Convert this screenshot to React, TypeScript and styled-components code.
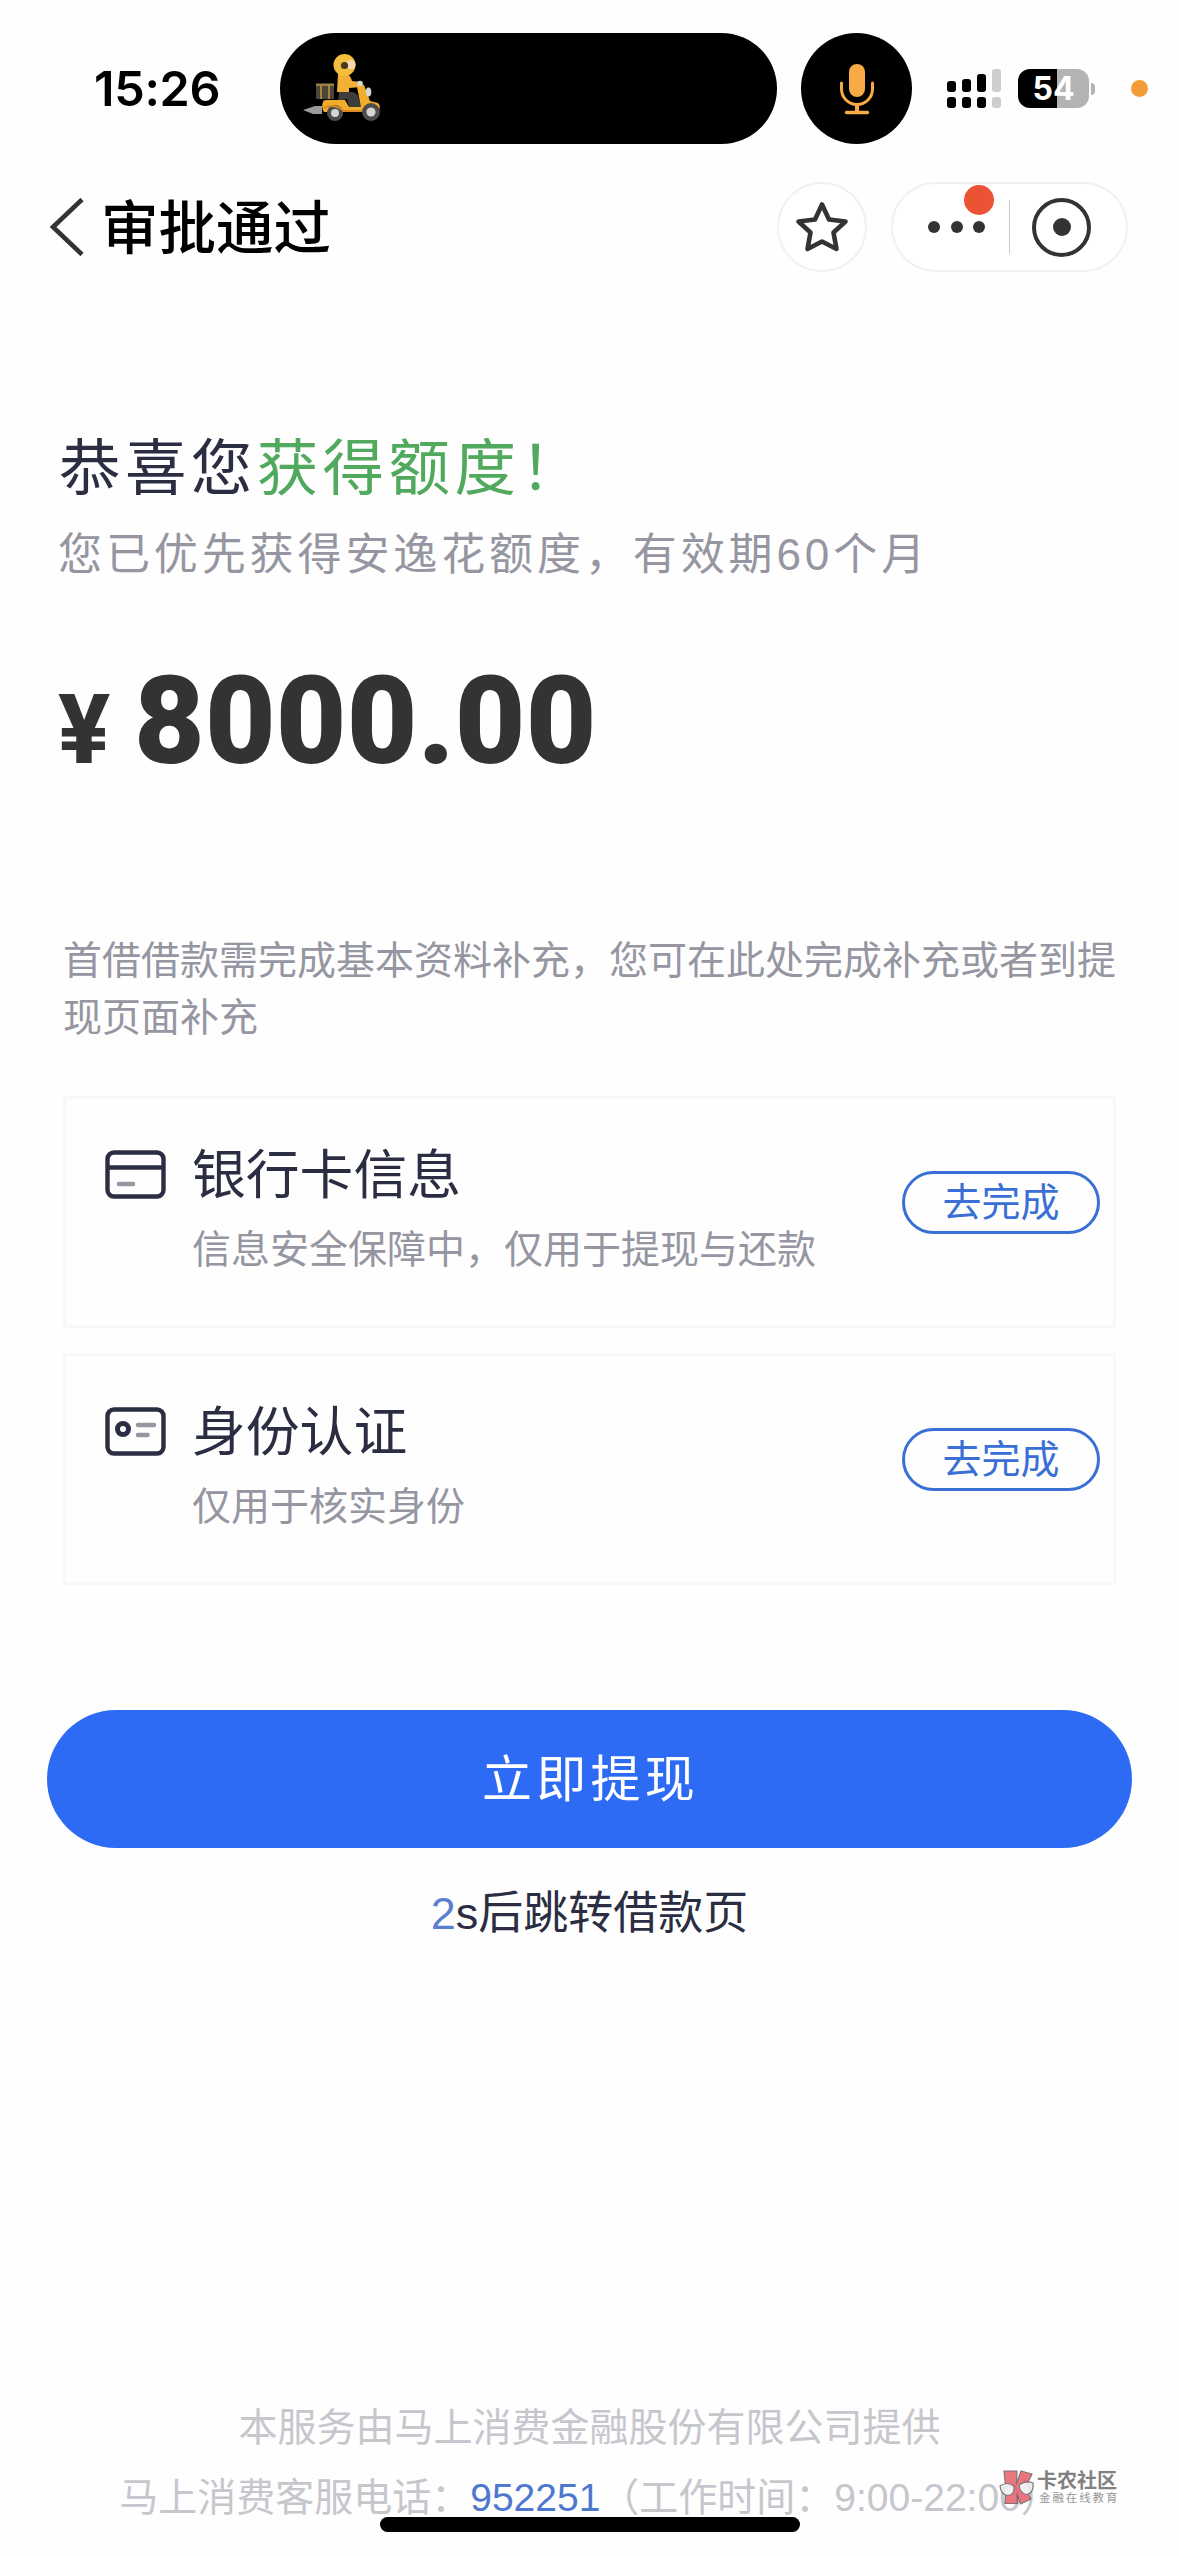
import React from "react";
import styled, { createGlobalStyle } from "styled-components";

const sans = `"Liberation Sans", "Noto Sans CJK SC", sans-serif`;
const ink = "#2b2d42";
const muted = "#9596a1";
const blue = "#3a6fd6";

const GlobalStyle = createGlobalStyle`
  body { margin: 0; background: #fefefe; }
  * { box-sizing: border-box; }
  button { font: inherit; cursor: pointer; }
`;

const Page = styled.div`
  position: relative;
  display: flex;
  flex-direction: column;
  width: 1179px;
  height: 2556px;
  overflow: hidden;
  background: #fefefe;
  color: ${ink};
  font-family: ${sans};
`;

const StatusBar = styled.header`
  display: flex;
  align-items: center;
  height: 111px;
  margin-top: 33px;
  padding: 0 31px 0 94px;
`;

const Clock = styled.time`
  width: 186px;
  font: 600 48.5px/58px Inter, sans-serif;
  letter-spacing: -0.3px;
  color: #000;
`;

const Island = styled.div`
  display: flex;
  align-items: center;
  width: 497px;
  height: 111px;
  padding-left: 20px;
  border-radius: 56px;
  background: #000;
`;

const MicBubble = styled.div`
  display: flex;
  align-items: center;
  justify-content: center;
  width: 111px;
  height: 111px;
  margin-left: 24px;
  border-radius: 50%;
  background: #000;
`;

const Signal = styled.div`
  display: flex;
  align-items: flex-end;
  gap: 6px;
  height: 39px;
  margin: 0 17px 0 35px;
`;

const SignalColumn = styled.div<{ $dim?: boolean }>`
  display: flex;
  flex-direction: column;
  gap: 5px;
  width: 9px;
  color: ${(p) => (p.$dim ? "#cdcdcd" : "#000")};
`;

const SignalBar = styled.i<{ $height: number }>`
  height: ${(p) => p.$height}px;
  border-radius: 3px;
  background: currentColor;
`;

const Battery = styled.div`
  display: flex;
  align-items: center;
  gap: 2px;
`;

const BatteryBody = styled.div`
  display: flex;
  align-items: center;
  justify-content: center;
  width: 71px;
  height: 39px;
  border-radius: 12px;
  background: linear-gradient(90deg, #000 55%, #b3b3b3 55%);
  color: #fff;
  font: 700 32px/39px Inter, sans-serif;
`;

const BatteryTip = styled.i`
  width: 4px;
  height: 12px;
  border-radius: 0 5px 5px 0;
  background: #b3b3b3;
`;

const PrivacyDot = styled.i`
  width: 17px;
  height: 17px;
  margin-left: auto;
  border-radius: 50%;
  background: #f29c38;
`;

const NavBar = styled.nav`
  display: flex;
  align-items: center;
  height: 90px;
  margin-top: 38px;
  padding: 0 51px 0 49px;
`;

const NavTitle = styled.h1`
  margin: 3px auto 0 16px;
  font-size: 57.5px;
  font-weight: 500;
  line-height: 80px;
  color: #000;
`;

const StarButton = styled.button`
  display: flex;
  align-items: center;
  justify-content: center;
  width: 90px;
  height: 90px;
  padding: 0;
  border: 2px solid #f1f1f1;
  border-radius: 50%;
  background: #fff;
`;

const Capsule = styled.div`
  display: flex;
  align-items: center;
  width: 237px;
  height: 90px;
  margin-left: 24px;
  padding-left: 35px;
  border: 2px solid #f1f1f1;
  border-radius: 45px;
  background: #fff;
`;

const MoreDots = styled.div`
  position: relative;
  display: flex;
  gap: 10.5px;
`;

const Dot = styled.i`
  width: 12px;
  height: 12px;
  border-radius: 50%;
  background: #333;
`;

const UnreadBadge = styled.i`
  position: absolute;
  right: -9px;
  bottom: 18px;
  width: 30px;
  height: 30px;
  border-radius: 50%;
  background: #ea5334;
`;

const CapsuleDivider = styled.i`
  width: 1px;
  height: 54px;
  margin: 0 22px 0 24px;
  background: #cacaca;
`;

const CloseRing = styled.div`
  display: flex;
  align-items: center;
  justify-content: center;
  width: 59px;
  height: 59px;
  border: 4px solid #333;
  border-radius: 50%;
`;

const CloseCore = styled.i`
  width: 18px;
  height: 18px;
  border-radius: 50%;
  background: #333;
`;

const Headline = styled.h2`
  margin: 153px 0 0 59px;
  font-size: 61.5px;
  font-weight: 400;
  line-height: 88px;
  letter-spacing: 4.4px;
`;

const Highlight = styled.span`
  color: #50a95c;
`;

const Subline = styled.p`
  margin: 10px 0 0 58px;
  font-size: 44px;
  line-height: 64px;
  letter-spacing: 3.9px;
  color: ${muted};
`;

const Amount = styled.div`
  display: flex;
  align-items: baseline;
  height: 140px;
  margin: 65px 0 0 58px;
  font: 900 122px/140px Roboto, sans-serif;
  color: #333;
`;

const Currency = styled.span`
  width: 76px;
  font-size: 97px;
  font-weight: 800;
  line-height: 1;
`;

const AmountValue = styled.span`
  letter-spacing: 0.2px;
`;

const Notice = styled.p`
  width: 1054px;
  margin: 140px 0 0 63px;
  font-size: 39px;
  line-height: 57px;
  color: ${muted};
`;

const TaskList = styled.ul`
  display: flex;
  flex-direction: column;
  gap: 25px;
  margin: 50px 63px 0;
  padding: 0;
  list-style: none;
`;

const TaskCard = styled.li`
  display: flex;
  align-items: flex-start;
  height: 232px;
  padding: 36px 13px 0 39px;
  border: 3px solid #f8f8f9;
`;

const TaskIcon = styled.svg`
  width: 61px;
  height: 49px;
  margin-top: 15px;
`;

const TaskText = styled.div`
  margin: 1px auto 0 26px;
`;

const TaskTitle = styled.h3`
  margin: 0;
  font-size: 53.8px;
  font-weight: 400;
  line-height: 78px;
`;

const TaskHint = styled.p`
  margin: 8px 0 0;
  font-size: 39px;
  line-height: 56px;
  color: ${muted};
`;

const TaskButton = styled.button`
  display: flex;
  align-items: center;
  justify-content: center;
  width: 198px;
  height: 63px;
  margin-top: 36px;
  padding: 0;
  border: 3px solid ${blue};
  border-radius: 32px;
  background: transparent;
  color: ${blue};
  font-size: 39px;
  line-height: 57px;
`;

const PrimaryButton = styled.button`
  height: 138px;
  margin: 125px 47px 0;
  padding: 2px 0 0 2px;
  border: 0;
  border-radius: 69px;
  background: #2d6bf5;
  color: #fff;
  font-size: 50px;
  line-height: 136px;
  letter-spacing: 4.2px;
`;

const Countdown = styled.p`
  margin: 33px 0 0;
  font-size: 45px;
  line-height: 66px;
  text-align: center;
`;

const Seconds = styled.span`
  color: #5b7fd0;
`;

const Footer = styled.footer`
  display: flex;
  flex-direction: column;
  align-items: center;
  margin-top: 446px;
  font-size: 39px;
  line-height: 70px;
  color: #c6c7cd;
  white-space: nowrap;
`;

const Phone = styled.a`
  color: #4d78cf;
`;

const HomeIndicator = styled.div`
  position: absolute;
  left: 380px;
  bottom: 24px;
  width: 420px;
  height: 15px;
  border-radius: 8px;
  background: #000;
`;

const Watermark = styled.div`
  position: absolute;
  right: 60px;
  bottom: 50px;
  display: flex;
  align-items: center;
  gap: 3px;
  opacity: 0.85;
`;

const WatermarkText = styled.div`
  display: flex;
  flex-direction: column;
  width: 82px;
  padding-top: 2px;
  white-space: nowrap;
`;

const WatermarkName = styled.span`
  font-size: 20px;
  font-weight: 700;
  line-height: 20px;
  color: #6b6b6b;
`;

const WatermarkTag = styled.span`
  padding-left: 2px;
  font-size: 11.5px;
  line-height: 15px;
  letter-spacing: 1.9px;
  color: #858585;
`;

const Scooter = () => (
  <svg width="84" height="84" viewBox="300 60 84 84">
    <path d="M303 107 L315 103 H322 V111 H313 Z" fill="#9b9b9d" transform="translate(0 16)" />
    <g transform="translate(0 12)">
      <rect x="316" y="84" width="18" height="16" rx="1" fill="#4b4638" />
      <path d="M316 86H334M321 86V100M329 86V100" stroke="#b99443" strokeWidth="1.6" />
      <path d="M338 75h9q4 2 5 7l9 1v5l-12 1v4h-12z" fill="#f2b136" />
      <path d="M339 93h14q6 2 6 8l3 7h-13l-2-8-9 2z" fill="#3f3d3c" />
      <path d="M323 103q0-2 4-2h18l4 7h12l-4-20 3-3 4 1 6 16 8 2q3 3 1 7l-6-1q-8-2-10 3h-39q-3-5-1-10z" fill="#f2ad2d" />
      <ellipse cx="368.500" cy="93" rx="2.800" ry="4.500" fill="#d5d5d5" />
      <circle cx="360" cy="84.500" r="2.800" fill="#cfdcd2" />
      <circle cx="335" cy="114" r="8" fill="#4c4c4c" />
      <circle cx="335" cy="114" r="4" fill="#d7d5d0" />
      <circle cx="371" cy="113" r="9" fill="#4c4c4c" />
      <circle cx="371" cy="113" r="4.600" fill="#d7d5d0" />
      <path d="M324 109q10-5 20 3h18" stroke="#d78b28" strokeWidth="2" fill="none" />
      <circle cx="344.500" cy="66" r="11" fill="#f4bd3b" />
      <circle cx="351" cy="65.500" r="4.500" fill="#f3d9b5" />
      <circle cx="344.500" cy="66.500" r="3.600" fill="#4a3920" />
    </g>
  </svg>
);

const Mic = () => (
  <svg width="36" height="52" viewBox="0 0 36 52" fill="none" stroke="#f8ab45" strokeLinecap="round">
    <rect x="10" y="1" width="16" height="33" rx="8" fill="#f8ab45" stroke="none" />
    <path d="M2.500 20V26a15.500 15.500 0 0 0 31 0V20" strokeWidth="3" />
    <path d="M18 42V49" strokeWidth="4" />
    <path d="M7.500 49.500H28.500" strokeWidth="3.400" />
  </svg>
);

const StarIcon = () => (
  <svg width="54" height="54" viewBox="0 0 54 54" fill="none" stroke="#333" strokeWidth="4.600" strokeLinejoin="round">
    <path d="M27 4.500L34 19.500L50.500 21.500L38.500 32.500L41.500 49L27 41.500L12.500 49L15.500 32.500L3.500 21.500L20 19.500Z" />
  </svg>
);

const BankCardIcon = () => (
  <TaskIcon viewBox="0 0 61 49" fill="none" stroke={ink} strokeWidth="4.400">
    <rect x="2.500" y="2.500" width="56" height="44" rx="6.500" />
    <path d="M2.500 17.500H58.500" />
    <path d="M14 34H28" stroke={muted} strokeLinecap="round" strokeWidth="4.600" />
  </TaskIcon>
);

const IdCardIcon = () => (
  <TaskIcon viewBox="0 0 61 49" fill="none" stroke={ink} strokeWidth="4.400">
    <rect x="2.500" y="2.500" width="56" height="44" rx="6.500" />
    <circle cx="18" cy="22" r="5.500" strokeWidth="5" />
    <path d="M33 18H49M33 28H42.500" stroke={muted} strokeLinecap="round" />
  </TaskIcon>
);

const WatermarkLogo = () => (
  <svg width="35" height="36" viewBox="0 0 35 36" stroke="#6b5d5d" strokeWidth="1.200" strokeLinejoin="round">
    <path d="M5 1H18L17.500 14L22 1L33 4L26 18L32 29L21.500 34L18 24L18.500 33.500H6L7 20Z" fill="#ea5f6b" />
    <path d="M1 16Q8 11 15 16Q16 25 9 25.500Q2 25 1 16Z" fill="#eee" />
    <path d="M20 15Q27 10 34 13Q35 23 28 24.500Q21 24 20 15Z" fill="#eee" />
  </svg>
);

const signalHeights = [11, 13, 18, 23];

const tasks = [
  { icon: <BankCardIcon />, title: "银行卡信息", hint: "信息安全保障中，仅用于提现与还款" },
  { icon: <IdCardIcon />, title: "身份认证", hint: "仅用于核实身份" },
];

export default function App() {
  return (
    <Page lang="zh-CN">
      <GlobalStyle />
      <StatusBar>
        <Clock>15:26</Clock>
        <Island>
          <Scooter />
        </Island>
        <MicBubble>
          <Mic />
        </MicBubble>
        <Signal>
          {signalHeights.map((height, i) => (
            <SignalColumn key={height} $dim={i === 3}>
              <SignalBar $height={height} />
              <SignalBar $height={11} />
            </SignalColumn>
          ))}
        </Signal>
        <Battery>
          <BatteryBody>54</BatteryBody>
          <BatteryTip />
        </Battery>
        <PrivacyDot />
      </StatusBar>

      <NavBar>
        <svg width="36" height="58" viewBox="0 0 36 58" fill="none" stroke="#333" strokeWidth="4.600">
          <path d="M33 1.500L4 29L33 56.500" />
        </svg>
        <NavTitle>审批通过</NavTitle>
        <StarButton aria-label="收藏">
          <StarIcon />
        </StarButton>
        <Capsule>
          <MoreDots>
            <Dot />
            <Dot />
            <Dot />
            <UnreadBadge />
          </MoreDots>
          <CapsuleDivider />
          <CloseRing>
            <CloseCore />
          </CloseRing>
        </Capsule>
      </NavBar>

      <Headline>
        恭喜您<Highlight>获得额度！</Highlight>
      </Headline>
      <Subline>您已优先获得安逸花额度，有效期60个月</Subline>
      <Amount>
        <Currency>¥</Currency>
        <AmountValue>8000.00</AmountValue>
      </Amount>

      <Notice>首借借款需完成基本资料补充，您可在此处完成补充或者到提现页面补充</Notice>
      <TaskList>
        {tasks.map((task) => (
          <TaskCard key={task.title}>
            {task.icon}
            <TaskText>
              <TaskTitle>{task.title}</TaskTitle>
              <TaskHint>{task.hint}</TaskHint>
            </TaskText>
            <TaskButton>去完成</TaskButton>
          </TaskCard>
        ))}
      </TaskList>

      <PrimaryButton>立即提现</PrimaryButton>
      <Countdown>
        <Seconds>2</Seconds>s后跳转借款页
      </Countdown>

      <Footer>
        <div>本服务由马上消费金融股份有限公司提供</div>
        <div>
          马上消费客服电话：<Phone>952251</Phone>（工作时间：9:00-22:00）
        </div>
      </Footer>

      <HomeIndicator />
      <Watermark>
        <WatermarkLogo />
        <WatermarkText>
          <WatermarkName>卡农社区</WatermarkName>
          <WatermarkTag>金融在线教育</WatermarkTag>
        </WatermarkText>
      </Watermark>
    </Page>
  );
}
